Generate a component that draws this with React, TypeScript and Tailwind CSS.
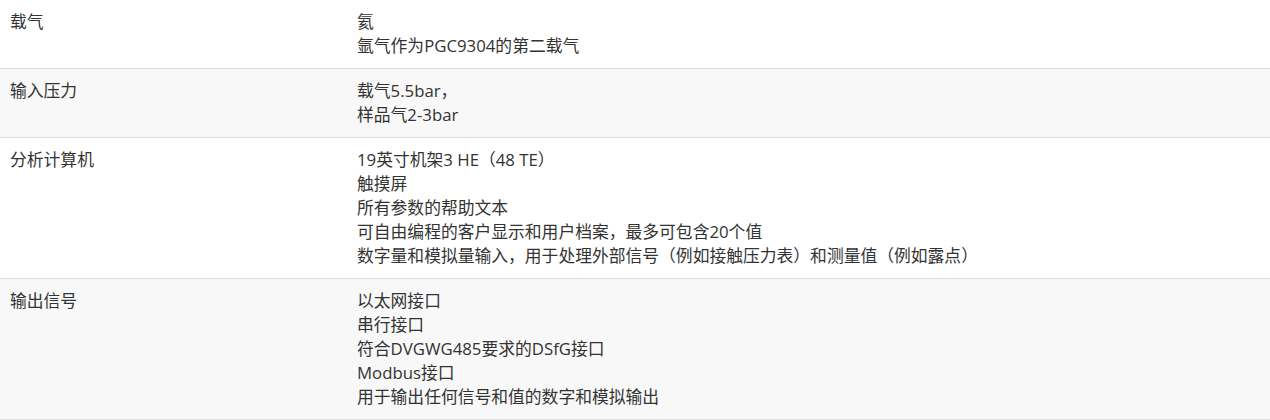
const rows: { label: string; lines: string[] }[] = [
  { label: "载气", lines: ["氦", "氩气作为PGC9304的第二载气"] },
  { label: "输入压力", lines: ["载气5.5bar，", "样品气2-3bar"] },
  {
    label: "分析计算机",
    lines: [
      "19英寸机架3 HE（48 TE）",
      "触摸屏",
      "所有参数的帮助文本",
      "可自由编程的客户显示和用户档案，最多可包含20个值",
      "数字量和模拟量输入，用于处理外部信号（例如接触压力表）和测量值（例如露点）",
    ],
  },
  {
    label: "输出信号",
    lines: [
      "以太网接口",
      "串行接口",
      "符合DVGWG485要求的DSfG接口",
      "Modbus接口",
      "用于输出任何信号和值的数字和模拟输出",
    ],
  },
];

export default function App() {
  return (
    <div
      className="w-[1270px] bg-white text-[#333333] text-[16.8px] leading-[24px]"
      style={{ fontFamily: '"Open Sans", "Noto Sans CJK SC", sans-serif' }}
    >
      {rows.map((row, i) => (
        <div
          key={row.label}
          className={`flex border-b border-[#dddddd] ${i % 2 === 1 ? "bg-[#f8f8f8]" : "bg-white"}`}
        >
          <div className="w-[347px] shrink-0 px-[10px] py-[10px]">{row.label}</div>
          <div className="flex-1 px-[10px] py-[10px]">
            {row.lines.map((line) => (
              <div key={line}>{line}</div>
            ))}
          </div>
        </div>
      ))}
    </div>
  );
}
